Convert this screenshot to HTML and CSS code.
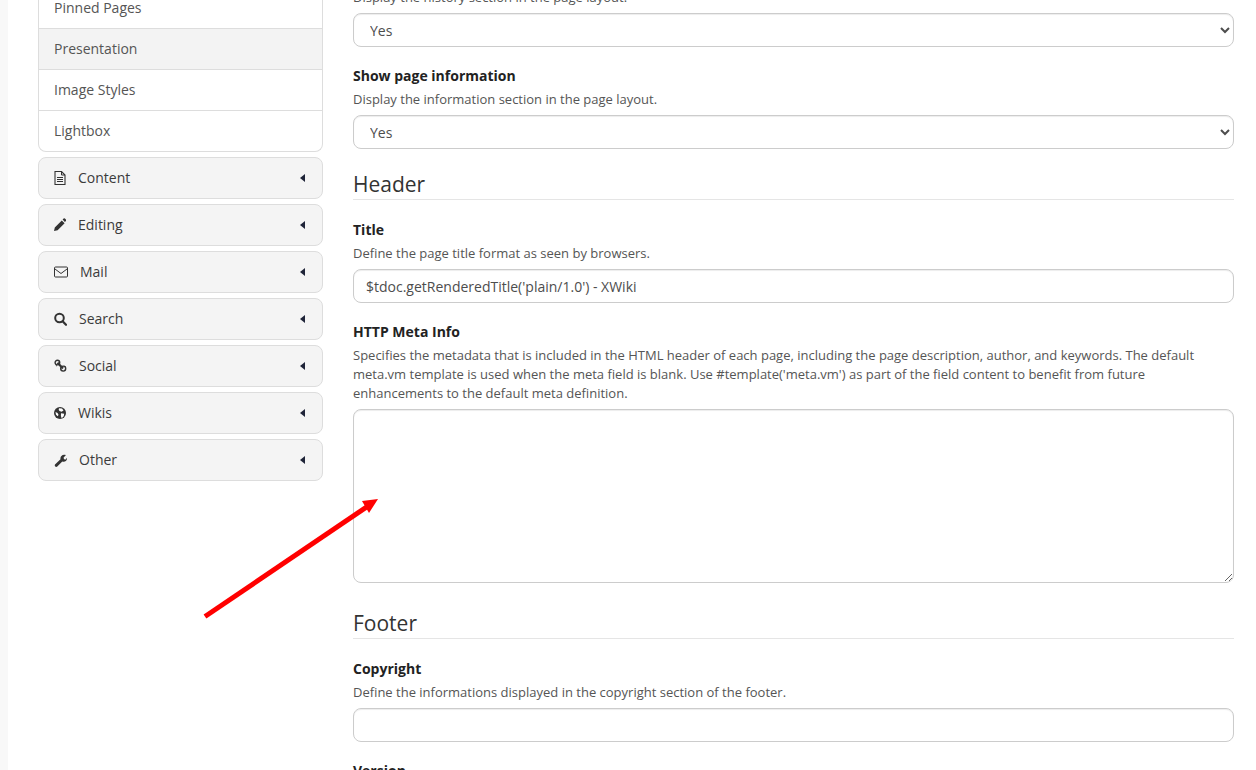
FILE: index.html
```html
<!DOCTYPE html>
<html lang="en">
<head>
<meta charset="utf-8">
<title>Administration</title>
<link rel="stylesheet" href="styles.css">
</head>
<body>
<div class="page">
  <aside class="sidebar">
    <ul class="menu">
      <li class="menu-item">Pinned Pages</li>
      <li class="menu-item active">Presentation</li>
      <li class="menu-item">Image Styles</li>
      <li class="menu-item">Lightbox</li>
    </ul>
    <div class="panel"><span class="panel-label gap-content"><svg class="icon w12" viewBox="0 0 12 14"><path d="M1 .5h6.5L11 4v9.5H1z" fill="none" stroke="#333" stroke-width="1.1"/><path d="M7.5 .5V4H11M3 6.5h6M3 8.5h6M3 10.5h6" fill="none" stroke="#333" stroke-width="1"/></svg>Content</span><i class="caret"></i></div>
    <div class="panel"><span class="panel-label gap-content"><svg class="icon w12" viewBox="0 0 12 14"><path d="M0 13l.8-3.6 7-7 2.8 2.8-7 7zM8.6 1.6l1-1a1 1 0 0 1 1.3 0l1 1a1 1 0 0 1 0 1.4l-1 1z" fill="#333"/></svg>Editing</span><i class="caret"></i></div>
    <div class="panel"><span class="panel-label gap-mail"><svg class="icon w14" viewBox="0 0 14 14"><rect x=".5" y="2" width="13" height="10" rx="1" fill="none" stroke="#333"/><path d="M1 4l6 4.5L13 4" fill="none" stroke="#333"/></svg>Mail</span><i class="caret"></i></div>
    <div class="panel"><span class="panel-label gap-search"><svg class="icon w13" viewBox="0 0 13 14"><circle cx="5.5" cy="6" r="4.3" fill="none" stroke="#333" stroke-width="2"/><path d="M8.6 9.2l3.4 3.6" stroke="#333" stroke-width="2.2" stroke-linecap="round"/></svg>Search</span><i class="caret"></i></div>
    <div class="panel"><span class="panel-label gap-search"><svg class="icon w13" viewBox="0 0 13 14"><circle cx="3.4" cy="3.6" r="2.3" fill="none" stroke="#333" stroke-width="1.4"/><circle cx="9.2" cy="9.6" r="2.5" fill="none" stroke="#333" stroke-width="1.4"/><path d="M3.6 3.8l5.4 5.6" stroke="#333" stroke-width="2.2"/><path d="M1.8 6.2l1 .8M10.6 6.8l.8.9" stroke="#333" stroke-width="1"/></svg>Social</span><i class="caret"></i></div>
    <div class="panel"><span class="panel-label gap-content"><svg class="icon w12" viewBox="0 0 12 14"><circle cx="6" cy="7" r="6" fill="#333"/><path d="M5 2.2l3 .3 1.5 2-2 1.2-2-.7-.8-1.2zM7 7.3l3.2.4-.5 2.5-2 2-.8-2.2zM1.5 6l2 1 1 1.7-.7 1.5-1.8-1.5z" fill="#fff"/></svg>Wikis</span><i class="caret"></i></div>
    <div class="panel"><span class="panel-label gap-search"><svg class="icon w13" viewBox="0 0 13 14"><path d="M1 11.5L6.5 6.3C6 4 7.6 1.6 10.4 1.7L12 2 9.6 4.4l.4 1.8 1.7.4L13 4.7c.3 2.7-2 4.6-4.7 3.7L3 13.8c-1.2.7-2.9-1-2-2.3z" fill="#333"/></svg>Other</span><i class="caret"></i></div>
  </aside>
  <main class="content">
    <div class="field first">
      <p class="hint">Display the history section in the page layout.</p>
      <select class="control select"><option>Yes</option></select>
    </div>
    <div class="field">
      <label class="label">Show page information</label>
      <p class="hint">Display the information section in the page layout.</p>
      <select class="control select"><option>Yes</option></select>
    </div>
    <h2 class="section">Header</h2>
    <div class="field">
      <label class="label">Title</label>
      <p class="hint">Define the page title format as seen by browsers.</p>
      <input class="control" type="text" value="$tdoc.getRenderedTitle('plain/1.0') - XWiki">
    </div>
    <div class="field">
      <label class="label">HTTP Meta Info</label>
      <p class="hint">Specifies the metadata that is included in the HTML header of each page, including the page description, author, and keywords. The default meta.vm template is used when the meta field is blank. Use #template('meta.vm') as part of the field content to benefit from future enhancements to the default meta definition.</p>
      <textarea class="control area"></textarea>
    </div>
    <h2 class="section">Footer</h2>
    <div class="field">
      <label class="label">Copyright</label>
      <p class="hint">Define the informations displayed in the copyright section of the footer.</p>
      <input class="control" type="text">
    </div>
    <div class="field">
      <label class="label">Version</label>
    </div>
  </main>
</div>
<svg class="arrow" viewBox="0 0 200 140" width="200" height="140">
  <path d="M15 136.500L181 24" stroke="#ff0000" stroke-width="5" fill="none"/>
  <path d="M188 19L172 21L179 33z" fill="#ff0000"/>
</svg>
</body>
</html>
```
FILE: styles.css
```css
* { box-sizing: border-box; }
html, body { margin: 0; height: 770px; overflow: hidden; background: #fff; }
body {
  font-family: "Open Sans", "Liberation Sans", sans-serif;
  font-size: 14px;
  line-height: 20px;
  color: #333;
  position: relative;
}
.page {
  display: flex;
  height: 800px;
  margin-top: -12px;
  margin-left: 8px;
  padding: 0 22px 0 30px;
  gap: 30px;
  box-shadow: -8px 0 0 #f8f8f8;
}
.sidebar { width: 285px; flex: none; }
.menu {
  list-style: none;
  margin: 0 0 5px;
  padding: 0;
  border: 1px solid #ddd;
  border-top: 0;
  border-radius: 0 0 8px 8px;
  overflow: hidden;
}
.menu-item {
  height: 41px;
  padding: 10px 15px;
  color: #555;
  border-bottom: 1px solid #ddd;
}
.menu-item:last-child { border-bottom: 0; height: 40px; }
.menu-item.active { background: #f3f3f3; }
.panel {
  display: flex;
  align-items: center;
  justify-content: space-between;
  height: 42px;
  margin-bottom: 5px;
  padding: 0 17px 0 15px;
  background: #f4f4f4;
  border: 1px solid #ddd;
  border-radius: 8px;
}
.panel-label { display: flex; align-items: center; color: #3b3b3b; }
.icon { height: 14px; flex: none; display: block; }
.w12 { width: 12px; }
.w13 { width: 13px; }
.w14 { width: 14px; }
.gap-content .icon { margin-right: 12px; }
.gap-mail .icon { margin-right: 12px; }
.gap-search .icon { margin-right: 12px; }
.caret {
  width: 0;
  height: 0;
  border-style: solid;
  border-width: 4.5px 5px 4.5px 0;
  border-color: transparent #1f2438 transparent transparent;
}
.content { flex: 1; min-width: 0; }
.field { margin-bottom: 19px; }
.label {
  display: block;
  font-weight: 700;
  color: #222;
  line-height: 20px;
  margin-bottom: 4px;
}
.hint {
  margin: 0 0 6px;
  font-size: 13px;
  line-height: 19px;
  color: #555;
}
.control {
  display: block;
  width: 100%;
  height: 34px;
  padding: 6px 12px;
  font: inherit;
  color: #4d4d4d;
  background: #fff;
  border: 1px solid #ccc;
  border-radius: 8px;
  box-shadow: inset 0 1px 1px rgba(0,0,0,.075);
}
.area { height: 174px; margin-bottom: 25px; }
.section {
  margin: 20px 0 20px;
  font-size: 21px;
  font-weight: 400;
  line-height: 30px;
  color: #333;
  border-bottom: 1px solid #e5e5e5;
}
.arrow { position: absolute; left: 190px; top: 480px; }
```
